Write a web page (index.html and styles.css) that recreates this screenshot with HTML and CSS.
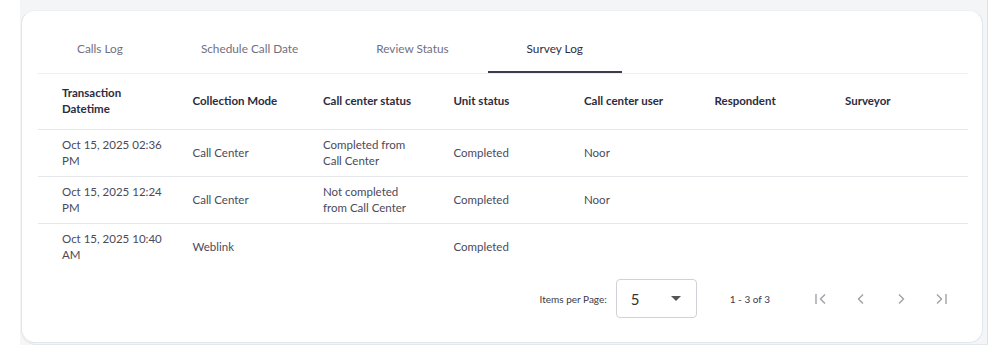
FILE: index.html
```
<!DOCTYPE html>
<html lang="en">
<head>
    <meta charset="UTF-8">
    <meta name="viewport" content="width=device-width, initial-scale=1.0">
    <title>Survey Log</title>
    <link rel="stylesheet" href="styles.css">
</head>
<body>
    <div class="panel">
        <div class="card">
            <div class="tabs">
                <div class="tab">Calls Log</div>
                <div class="tab">Schedule Call Date</div>
                <div class="tab">Review Status</div>
                <div class="tab active">Survey Log</div>
            </div>

            <div class="log-table">
                <div class="row head">
                    <div class="cell">Transaction<br>Datetime</div>
                    <div class="cell">Collection Mode</div>
                    <div class="cell">Call center status</div>
                    <div class="cell">Unit status</div>
                    <div class="cell">Call center user</div>
                    <div class="cell">Respondent</div>
                    <div class="cell">Surveyor</div>
                </div>
                <div class="row">
                    <div class="cell">Oct 15, 2025 02:36<br>PM</div>
                    <div class="cell">Call Center</div>
                    <div class="cell">Completed from<br>Call Center</div>
                    <div class="cell">Completed</div>
                    <div class="cell">Noor</div>
                    <div class="cell"></div>
                    <div class="cell"></div>
                </div>
                <div class="row">
                    <div class="cell">Oct 15, 2025 12:24<br>PM</div>
                    <div class="cell">Call Center</div>
                    <div class="cell">Not completed<br>from Call Center</div>
                    <div class="cell">Completed</div>
                    <div class="cell">Noor</div>
                    <div class="cell"></div>
                    <div class="cell"></div>
                </div>
                <div class="row last">
                    <div class="cell">Oct 15, 2025 10:40<br>AM</div>
                    <div class="cell">Weblink</div>
                    <div class="cell"></div>
                    <div class="cell">Completed</div>
                    <div class="cell"></div>
                    <div class="cell"></div>
                    <div class="cell"></div>
                </div>
            </div>

            <div class="paginator">
                <span class="page-label">Items per Page:</span>
                <div class="page-select">
                    <span>5</span>
                    <span class="caret"></span>
                </div>
                <span class="range">1 - 3 of 3</span>
                <div class="nav">
                    <svg width="16" height="16" viewBox="0 0 16 16"><path d="M3 3v10M12 3.5L7.5 8l4.5 4.5"/></svg>
                    <svg width="16" height="16" viewBox="0 0 16 16"><path d="M10 3.5L5.5 8l4.5 4.5"/></svg>
                    <svg width="16" height="16" viewBox="0 0 16 16"><path d="M6 3.5L10.5 8 6 12.5"/></svg>
                    <svg width="16" height="16" viewBox="0 0 16 16"><path d="M4 3.5L8.5 8 4 12.5M13 3v10"/></svg>
                </div>
            </div>
        </div>
    </div>
</body>
</html>
```

FILE: styles.css
```
body {
    margin: 0;
    background-color: #fff;
    font-family: Lato, "Open Sans", sans-serif;
    color: #4a4a58;
}
.panel {
    margin-left: 20px;
    width: 968px;
    height: 345px;
    box-sizing: border-box;
    padding: 10px 4px 1px 1px;
    background-color: #f3f5f7;
    border-right: 1px solid #dde3e9;
    border-bottom: 1px solid #e3e8ed;
    border-bottom-left-radius: 16px;
    box-shadow: 0 13px 0 #f6f6f7;
}
.card {
    height: 100%;
    box-sizing: border-box;
    background-color: #fff;
    border: 1px solid #e1e6ec;
    border-top-color: #eef1f4;
    border-radius: 14px;
    padding: 13px 14px 0 16px;
}
.tabs {
    display: flex;
    border-bottom: 1px solid #eceef1;
}
.tab {
    height: 47px;
    line-height: 50px;
    padding: 0 39px;
    font-size: 11.8px;
    color: #707080;
    border-bottom: 2px solid transparent;
}
.tab.active {
    color: #2e2e40;
    border-bottom-color: #3c3c4e;
}
.log-table {
    display: flex;
    flex-direction: column;
}
.row {
    display: grid;
    grid-template-columns: repeat(7, 130.5px);
    align-items: center;
    padding: 7px 0;
    border-bottom: 1px solid #e6e8eb;
    font-size: 11.5px;
    line-height: 16px;
    color: #4a4a5a;
}
.row.head {
    padding: 11px 0 12px;
    font-weight: bold;
    color: #2c2c3e;
}
.row.last {
    border-bottom: none;
}
.cell {
    padding-left: 24px;
}
.paginator {
    display: flex;
    align-items: center;
    justify-content: flex-end;
    padding: 9px 19px 0 0;
}
.page-label {
    font-size: 10px;
    color: #3a3a4a;
    margin-right: 9px;
}
.page-select {
    width: 81px;
    height: 39px;
    box-sizing: border-box;
    border: 1px solid #cfd2d6;
    border-radius: 4px;
    display: flex;
    align-items: center;
    justify-content: space-between;
    padding: 0 15px 0 14px;
    font-size: 15px;
    color: #333;
}
.caret {
    width: 0;
    height: 0;
    border-left: 5px solid transparent;
    border-right: 5px solid transparent;
    border-top: 5px solid #555;
}
.range {
    font-size: 10px;
    color: #3a3a4a;
    margin-left: 33px;
}
.nav {
    display: flex;
    gap: 24px;
    margin-left: 43px;
}
.nav svg {
    fill: none;
    stroke: #a0a0a8;
    stroke-width: 1.4;
}
```
